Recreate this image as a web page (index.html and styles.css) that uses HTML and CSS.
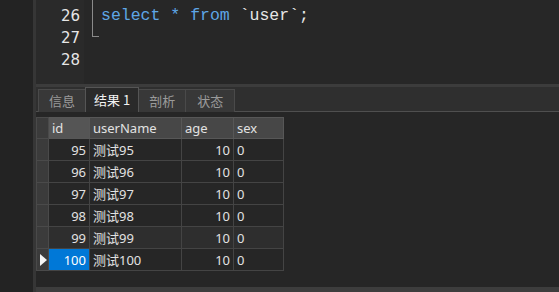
FILE: index.html
```html
<!DOCTYPE html>
<html lang="zh">
<head>
  <meta charset="UTF-8" />
  <title>查询结果</title>
  <link rel="stylesheet" href="styles.css">
</head>
<body>
  <div class="app">
    <div class="strip"></div>
    <div class="divider"></div>

    <div class="main">
      <!-- 编辑器 -->
      <div class="editor">
        <div class="gutter">
          <div class="ln">26</div>
          <div class="ln">27</div>
          <div class="ln">28</div>
        </div>
        <div class="fold"><span class="fold-line"></span></div>
        <div class="code">
          <div class="line"><span class="kw">select</span> <span class="kw">*</span> <span class="kw">from</span> `user`;</div>
        </div>
      </div>

      <div class="split"></div>

      <!-- 标签 -->
      <div class="tabs">
        <div class="tab">信息</div>
        <div class="tab active">结果 1</div>
        <div class="tab">剖析</div>
        <div class="tab">状态</div>
      </div>

      <!-- 结果表格 -->
      <div class="results">
        <table class="grid">
          <colgroup>
            <col class="c-ind"><col class="c-id"><col class="c-name"><col class="c-age"><col class="c-sex">
          </colgroup>
          <thead>
            <tr>
              <th class="ind"></th>
              <th class="sorted">id</th>
              <th>userName</th>
              <th>age</th>
              <th>sex</th>
            </tr>
          </thead>
          <tbody>
            <tr><td class="ind"></td><td class="num">95</td><td>测试95</td><td class="num">10</td><td>0</td></tr>
            <tr><td class="ind"></td><td class="num">96</td><td>测试96</td><td class="num">10</td><td>0</td></tr>
            <tr><td class="ind"></td><td class="num">97</td><td>测试97</td><td class="num">10</td><td>0</td></tr>
            <tr><td class="ind"></td><td class="num">98</td><td>测试98</td><td class="num">10</td><td>0</td></tr>
            <tr class="hover"><td class="ind"></td><td class="num">99</td><td>测试99</td><td class="num">10</td><td>0</td></tr>
            <tr class="current"><td class="ind"><span class="arrow"></span></td><td class="num sel">100</td><td>测试100</td><td class="num">10</td><td>0</td></tr>
          </tbody>
        </table>
      </div>

      <div class="bottom"></div>
    </div>
  </div>
</body>
</html>
```

FILE: styles.css
```css
html, body {
  margin: 0;
  padding: 0;
  height: 100%;
  overflow: hidden;
  background: #262626;
}

.app {
  display: flex;
  width: 559px;
  height: 292px;
}

.strip {
  width: 33px;
  background: #232323;
}

.divider {
  width: 3px;
  background: #363636;
}

.main {
  flex: 1;
  display: flex;
  flex-direction: column;
}

/* Editor */
.editor {
  height: 84px;
  display: flex;
  background: #272727;
}

.gutter {
  width: 44px;
  padding: 5px 4px 0 0;
  background: #2a2a2a;
  text-align: right;
  font-family: "DejaVu Sans", sans-serif;
  font-size: 15px;
  color: #e6e6e6;
}

.ln {
  height: 22px;
  line-height: 22px;
}

.fold {
  width: 16px;
}

.fold-line {
  display: block;
  margin-left: 8px;
  width: 7px;
  height: 37px;
  border-left: 1px solid #8a8a8a;
  border-bottom: 1px solid #8a8a8a;
  box-sizing: border-box;
}

.code {
  padding: 5px 0 0 1px;
  font-family: "Liberation Mono", monospace;
  font-size: 16.5px;
  color: #e6e6e6;
}

.line {
  height: 22px;
  line-height: 22px;
  white-space: pre;
}

.kw {
  color: #5ea6e6;
}

.split {
  height: 3px;
  background: #3c3c3c;
}

/* Tabs */
.tabs {
  height: 24px;
  display: flex;
  align-items: flex-end;
  padding-left: 2px;
  background: #2f2f2f;
  border-bottom: 1px solid #4f4f4f;
  font-family: "Noto Sans CJK SC", sans-serif;
  font-size: 13px;
}

.tab {
  height: 22px;
  line-height: 22px;
  padding: 0 10px;
  margin-bottom: -1px;
  background: #383838;
  border: 1px solid #4a4a4a;
  border-bottom: none;
  color: #9a9a9a;
}

.tab + .tab {
  margin-left: -1px;
}

.tab:last-child {
  padding: 0 11px;
}

.tab.active {
  height: 24px;
  line-height: 24px;
  padding: 0 8px;
  background: #2a2a2a;
  border-color: #555;
  color: #f2f2f2;
  position: relative;
  z-index: 1;
}

/* Result grid */
.results {
  flex: 1;
  padding-top: 5px;
  background: #262626;
}

.grid {
  border-collapse: collapse;
  table-layout: fixed;
  width: 247px;
  font-family: "Noto Sans", "Noto Sans CJK SC", sans-serif;
  font-size: 13px;
  color: #e2e2e2;
}

.c-ind { width: 12px; }
.c-id { width: 41px; }
.c-name { width: 92px; }
.c-age { width: 52px; }
.c-sex { width: 50px; }

.grid th,
.grid td {
  border: 1px solid #444;
  padding: 0 3px;
  white-space: nowrap;
  overflow: hidden;
}

.grid th {
  height: 20px;
  text-align: left;
  font-weight: normal;
  background: #474747;
  border-color: #575757;
}

.grid th.sorted {
  background: #555;
}

.grid td {
  height: 21px;
  background: #262626;
}

.grid td.num {
  text-align: right;
}

.grid .ind {
  padding: 0;
  background: #3b3b3b;
  border-color: #4a4a4a;
}

.grid tr.hover td {
  background: #2e2e2e;
}

.grid tr.hover td.ind,
.grid tr.current td.ind {
  background: #3b3b3b;
}

.grid td.sel {
  background: #0078d7;
  color: #fff;
}

.arrow {
  display: block;
  width: 0;
  height: 0;
  margin-left: 3px;
  border-top: 6px solid transparent;
  border-bottom: 6px solid transparent;
  border-left: 7px solid #f4f4f4;
}

.bottom {
  height: 5px;
  background: #3d3d3d;
}
```
